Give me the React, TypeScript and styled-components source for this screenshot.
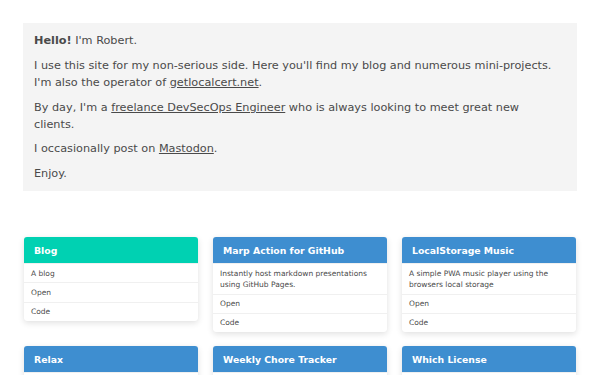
import styled, { createGlobalStyle } from "styled-components";

type Project = {
  title: string;
  description: string;
  accent?: boolean;
};

const projects: Project[] = [
  { title: "Blog", description: "A blog", accent: true },
  {
    title: "Marp Action for GitHub",
    description: "Instantly host markdown presentations using GitHub Pages.",
  },
  {
    title: "LocalStorage Music",
    description: "A simple PWA music player using the browsers local storage",
  },
  { title: "Relax", description: "A tiny ambient noise player" },
  { title: "Weekly Chore Tracker", description: "Keep track of weekly chores" },
  { title: "Which License", description: "Pick an open source license" },
];

const GlobalStyle = createGlobalStyle`
  html, body {
    margin: 0;
    padding: 0;
    background: #ffffff;
  }
  body {
    font-family: "DejaVu Sans", "Liberation Sans", sans-serif;
    color: #4a4a4a;
  }
`;

const Page = styled.div`
  padding: 23px 23px 40px;
`;

const Intro = styled.section`
  background: #f4f4f4;
  padding: 10px 22px 8px 11px;
  font-size: 11.25px;
  line-height: 1.5;
`;

const Para = styled.p`
  margin: 0 0 8px;

  &:last-child {
    margin-bottom: 0;
  }
`;

const Link = styled.a`
  color: #4a4a4a;
  text-decoration: underline;
`;

const Grid = styled.div`
  display: grid;
  grid-template-columns: repeat(3, 174px);
  column-gap: 15px;
  row-gap: 14px;
  align-items: start;
  margin: 46px 1px 0;
`;

const Card = styled.div`
  background: #ffffff;
  border-radius: 3px;
  box-shadow: 0 2px 6px rgba(10, 10, 10, 0.12), 0 0 1px rgba(10, 10, 10, 0.06);
  overflow: hidden;
`;

const CardHeader = styled.div<{ $accent?: boolean }>`
  height: 26px;
  display: flex;
  align-items: center;
  padding: 0 10px;
  background: ${(p) => (p.$accent ? "#00d1b2" : "#3e8ed0")};
  color: #ffffff;
  font-weight: bold;
  font-size: 9.3px;
`;

const Row = styled.div`
  padding: 3.5px 7px;
  font-size: 7.5px;
  line-height: 1.5;
  color: #4a4a4a;
  border-top: 1px solid #f0f0f0;

  &:first-of-type {
    border-top: none;
  }
`;

const App = () => {
  return (
    <Page>
      <GlobalStyle />
      <Intro>
        <Para>
          <b>Hello!</b> I'm Robert.
        </Para>
        <Para>
          I use this site for my non-serious side. Here you'll find my blog and
          numerous mini-projects. I'm also the operator of{" "}
          <Link href="#">getlocalcert.net</Link>.
        </Para>
        <Para>
          By day, I'm a <Link href="#">freelance DevSecOps Engineer</Link> who
          is always looking to meet great new clients.
        </Para>
        <Para>
          I occasionally post on <Link href="#">Mastodon</Link>.
        </Para>
        <Para>Enjoy.</Para>
      </Intro>
      <Grid>
        {projects.map((project) => {
          return (
            <Card key={project.title}>
              <CardHeader $accent={project.accent}>{project.title}</CardHeader>
              <Row>{project.description}</Row>
              <Row>Open</Row>
              <Row>Code</Row>
            </Card>
          );
        })}
      </Grid>
    </Page>
  );
};

export default App;
